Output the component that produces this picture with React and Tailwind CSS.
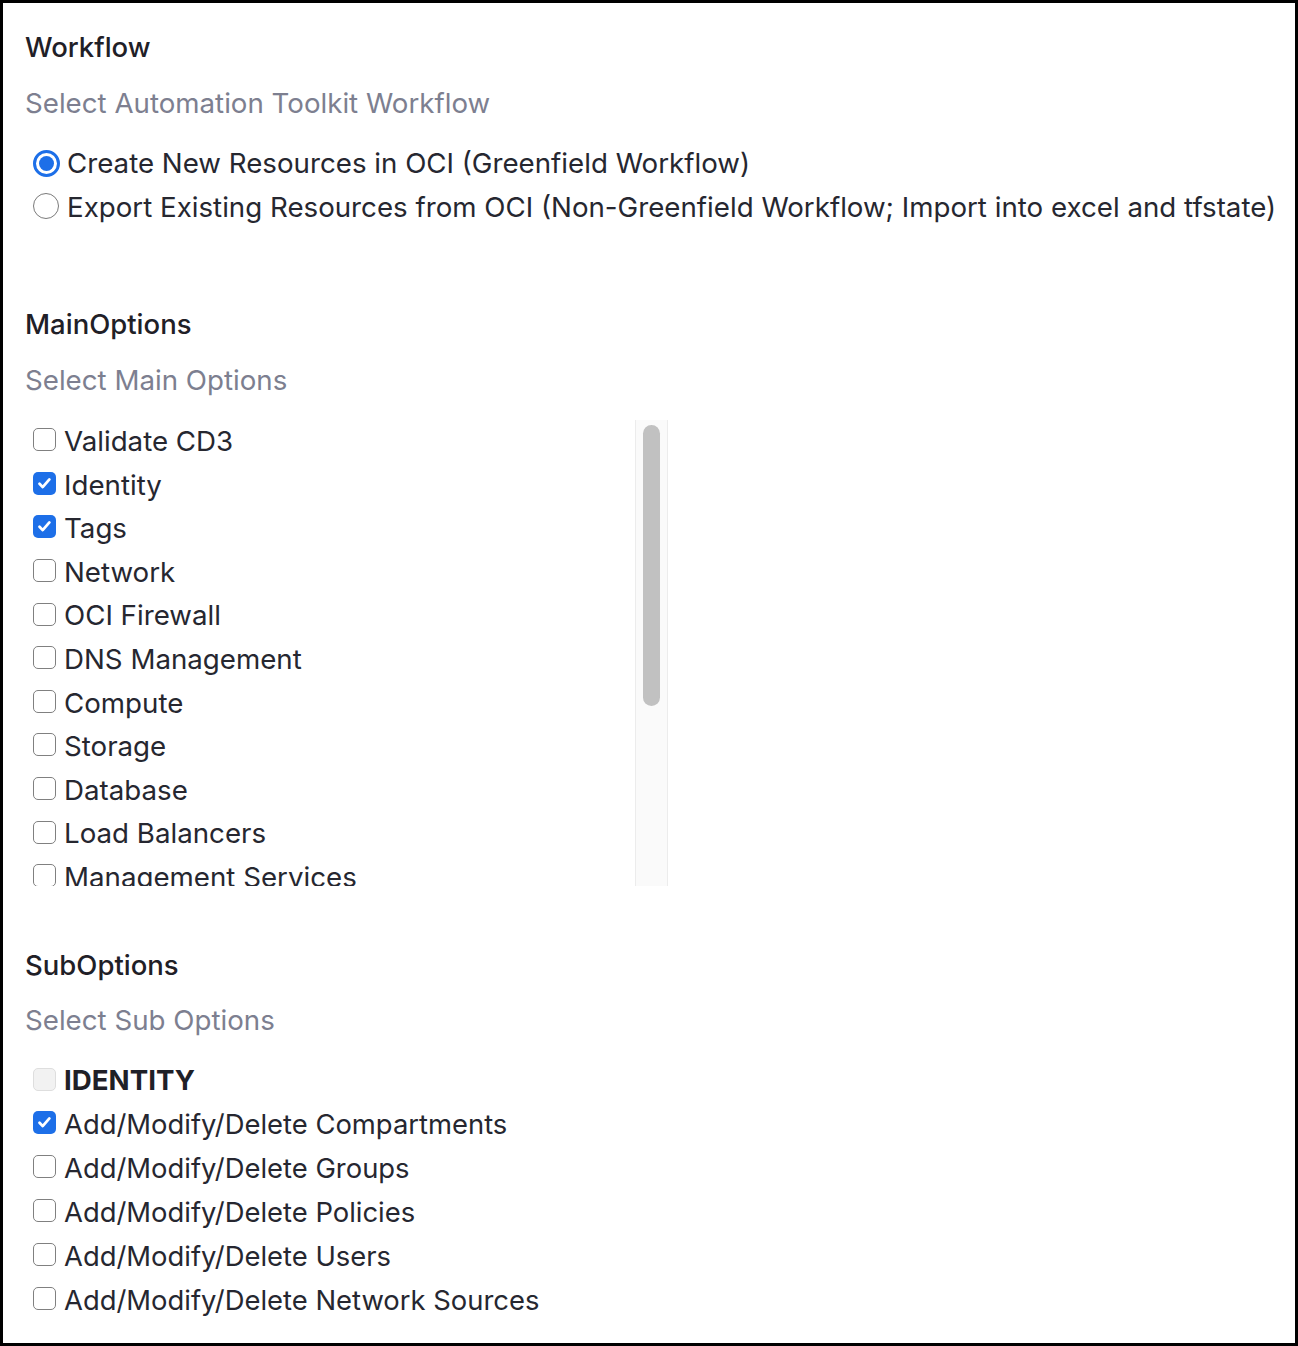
import React, { useState } from "react";

const mainOptions = [
  { label: "Validate CD3", checked: false },
  { label: "Identity", checked: true },
  { label: "Tags", checked: true },
  { label: "Network", checked: false },
  { label: "OCI Firewall", checked: false },
  { label: "DNS Management", checked: false },
  { label: "Compute", checked: false },
  { label: "Storage", checked: false },
  { label: "Database", checked: false },
  { label: "Load Balancers", checked: false },
  { label: "Management Services", checked: false },
];

const subOptions = [
  { label: "Add/Modify/Delete Compartments", checked: true },
  { label: "Add/Modify/Delete Groups", checked: false },
  { label: "Add/Modify/Delete Policies", checked: false },
  { label: "Add/Modify/Delete Users", checked: false },
  { label: "Add/Modify/Delete Network Sources", checked: false },
];

const Check = ({ checked, disabled }) => {
  if (disabled) {
    return <div className="w-[23px] h-[23px] shrink-0 rounded-[5px] border-[1.5px] border-[#dedede] bg-[#f2f2f2] -mt-[4px]" />;
  }
  if (checked) {
    return (
      <div className="w-[23px] h-[23px] shrink-0 rounded-[5px] bg-[#1d6fe8] flex items-center justify-center -mt-[4px]">
        <svg width="17" height="17" viewBox="0 0 16 16" fill="none">
          <path d="M3.3 8.3l3 3.1 6.3-7.2" stroke="white" strokeWidth="2.6" strokeLinecap="round" strokeLinejoin="round" />
        </svg>
      </div>
    );
  }
  return <div className="w-[23px] h-[23px] shrink-0 rounded-[5px] border-[1.7px] border-[#808080] bg-white -mt-[4px]" />;
};

const Radio = ({ checked }) =>
  checked ? (
    <div className="w-[27px] h-[27px] shrink-0 rounded-full border-[3px] border-[#1d6fe8] bg-white flex items-center justify-center -mt-[2px]">
      <div className="w-[15px] h-[15px] rounded-full bg-[#1d6fe8]" />
    </div>
  ) : (
    <div className="w-[26px] h-[26px] shrink-0 rounded-full border-[1.6px] border-[#7a7a7a] bg-white -mt-[4px]" />
  );

const Heading = ({ children }) => (
  <h2 className="h-[40px] leading-[40px] text-[27.5px] font-medium text-[#1f2027]">{children}</h2>
);

const Subtitle = ({ children, className = "" }) => (
  <p className={`h-[40px] leading-[40px] text-[27.7px] text-[#7d7f90] ${className}`}>{children}</p>
);

const App = () => {
  const [workflow, setWorkflow] = useState("create");

  return (
    <div
      className="w-[1298px] h-[1346px] border-[3px] border-black bg-white pl-[22px] pt-[24px] overflow-hidden"
      style={{ fontFamily: "Inter, 'Liberation Sans', sans-serif" }}
    >
      <Heading>Workflow</Heading>
      <Subtitle className="mt-[16px]">Select Automation Toolkit Workflow</Subtitle>

      <div className="mt-[19px] pl-[8px]">
        <label className="flex items-center gap-[7px] h-[44px] text-[27.7px] text-[#262730]" onClick={() => setWorkflow("create")}>
          <Radio checked={workflow === "create"} />
          <span>Create New Resources in OCI (Greenfield Workflow)</span>
        </label>
        <label className="flex items-center gap-[8px] h-[44px] text-[27.7px] text-[#262730]" onClick={() => setWorkflow("export")}>
          <Radio checked={workflow === "export"} />
          <span>Export Existing Resources from OCI (Non-Greenfield Workflow; Import into excel and tfstate)</span>
        </label>
      </div>

      <div className="mt-[74px]">
        <Heading>MainOptions</Heading>
      </div>
      <Subtitle className="mt-[16px]">Select Main Options</Subtitle>

      {/* scroll box */}
      <div className="mt-[20px] flex h-[466px] w-[643px]">
        <div className="w-[610px] h-full overflow-hidden pl-[8px]">
          {mainOptions.map((o) => (
            <div key={o.label} className="flex items-center gap-[8px] h-[43.6px] text-[27.7px] text-[#262730]">
              <Check checked={o.checked} />
              <span>{o.label}</span>
            </div>
          ))}
        </div>
        <div className="w-[33px] h-full bg-[#fafafa] border-x border-[#ececec] pt-[5px] flex justify-center">
          <div className="w-[17px] h-[281px] rounded-full bg-[#c1c1c1]" />
        </div>
      </div>

      <div className="mt-[59px]">
        <Heading>SubOptions</Heading>
      </div>
      <Subtitle className="mt-[15px]">Select Sub Options</Subtitle>

      <div className="mt-[19px] pl-[8px]">
        <div className="flex items-center gap-[8px] h-[44px] text-[27.7px] font-bold text-[#1f2027]">
          <Check disabled />
          <span>IDENTITY</span>
        </div>
        {subOptions.map((o) => (
          <div key={o.label} className="flex items-center gap-[8px] h-[43.8px] text-[27.4px] text-[#262730]">
            <Check checked={o.checked} />
            <span>{o.label}</span>
          </div>
        ))}
      </div>
    </div>
  );
};

export default App;
